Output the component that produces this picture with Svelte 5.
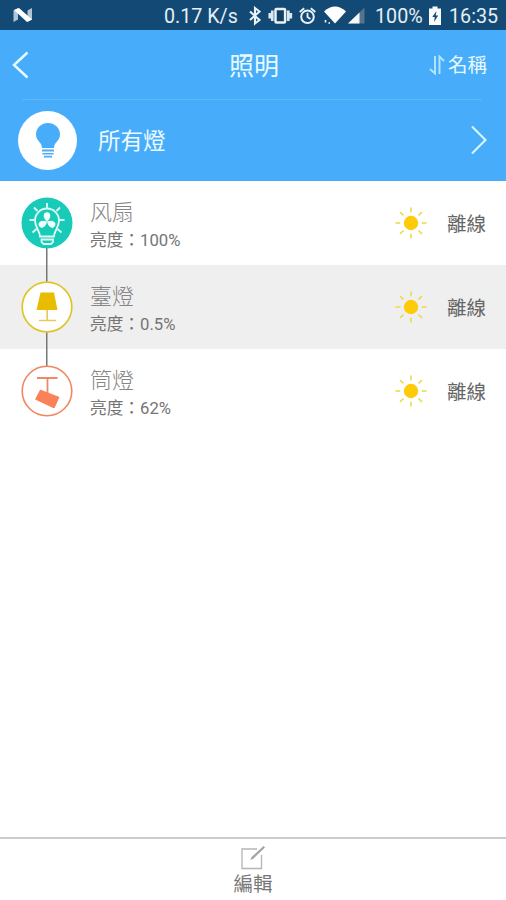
<script>
  const lights = [
    { name: '风扇', level: '100%', kind: 'fan', color: '#18cbb8' },
    { name: '臺燈', level: '0.5%', kind: 'table', color: '#dfc52c' },
    { name: '筒燈', level: '62%', kind: 'spot', color: '#f28661' }
  ];
  const rays = [0, 45, 90, 135, 180, 225, 270, 315];
</script>

<div class="screen">
  <div class="status">
    <svg class="logo" width="20" height="16" viewBox="0 0 20 16">
      <path d="M.500 3.500 5 1v11.500L.500 15zM14.500 3.500 19 1v11.500L14.500 15z" fill="#b3c5d5" />
      <path d="M1 3 6 1l13 11.500-5 2.500z" fill="#fff" />
    </svg>
    <span class="speed">0.17 K/s</span>
    <svg class="icons" width="124" height="22" viewBox="246 5 124 22">
      <path d="M250 11.500l9.500 8.500-4.500 3.500V8l4.500 3.500-9.500 8.500" fill="none" stroke="#e8f2f8" stroke-width="2.100" />
      <rect x="275.500" y="9" width="9.600" height="13.600" rx="1" fill="#123f64" stroke="#e8f2f8" stroke-width="2.500" />
      <path d="M272.300 10.500v10.500M288.300 10.500v10.500M269.800 13v5.500M290.800 13v5.500" stroke="#dce8f0" stroke-width="2.700" />
      <circle cx="307.500" cy="16.800" r="6.300" fill="none" stroke="#e8f2f8" stroke-width="2" />
      <path d="M307.500 12.800v4.200l3 2M299.700 12l4.500-3.800M315.300 12l-4.500-3.800" fill="none" stroke="#e8f2f8" stroke-width="1.800" />
      <path d="M324 11.500q11-10 22 0L335 23.500z" fill="#fff" />
      <path d="M325.500 20v2.500M328.500 23h1.500" stroke="#fff" stroke-width="1.500" />
      <path d="M364.500 7.500v16H348z" fill="#53738e" />
      <path d="M359.500 12.500v11H348z" fill="#f5f9fc" />
    </svg>
    <span class="percent">100%</span>
    <svg class="battery" width="14" height="20" viewBox="0 0 14 20">
      <path d="M1 2.500h3.500V.500h5v2H13V19H1z" fill="#f7fbfd" />
      <path d="M8.500 5 4.300 11h2.500L6 16l4.200-6.500H7.700z" fill="#164871" />
    </svg>
    <span class="clock">16:35</span>
  </div>

  <header>
    <svg class="back" width="18" height="30" viewBox="0 0 18 30"><path d="M16.500 2.500 3 15 16.500 27.500" fill="none" stroke="#e5fbff" stroke-width="2.500" /></svg>
    <h1>照明</h1>
    <div class="sort">
      <svg width="17" height="20" viewBox="0 0 17 20">
        <path d="M1 14 6 18.500V1M10.500 19V1.500l4.500 4.500" fill="none" stroke="#b4e6fa" stroke-width="1.900" />
      </svg>
      <span>名稱</span>
    </div>
  </header>

  <div class="all">
    <div class="disc">
      <svg width="26" height="36" viewBox="0 0 26 36" fill="#47adf8">
        <path d="M7 26c0-6-6-7-6-13.500a12 11.500 0 0 1 24 0c0 6.500-6 7.500-6 13.500z" />
        <path d="M7 27.500h12v2H7zM7.500 31h11v1.600h-11zM9 33.800h8v1.700H9z" />
      </svg>
    </div>
    <span class="all-name">所有燈</span>
    <svg width="18" height="32" viewBox="0 0 18 32"><path d="M2 2.500 15.500 16 2 29.500" fill="none" stroke="#dff8ff" stroke-width="2" /></svg>
  </div>

  <main>
    {#each lights as light}
      <div class="row">
        <div class="rail">
          <svg width="52" height="52" viewBox="0 0 52 52">
            {#if light.kind === 'fan'}
              <circle cx="26" cy="26" r="25.500" fill={light.color} />
              <g fill="none" stroke="#dffcf6" stroke-width="1.800">
                <path d="M19 39.500c0-6-5-8.500-5-16a12 12 0 0 1 24 0c0 7.500-5 10-5 16z" />
                <path d="M20.500 42.500h11.500v2.500l-2 2h-7.500l-2-2z" />
                <path d="M26 6v5M13 10.500l3.500 3.500M39 10.500 35.500 14M8.500 23h5M43.500 23h-5M11.500 35.500l4-3.500M40.500 35.500l-4-3.500" />
              </g>
              <g fill="#effffc">
                {#each [0, 120, 240] as angle}
                  <path d="M26 24.500q-4.500-4-2.800-8 2.800-2.500 5.600 0 1.700 4-2.800 8z" transform="rotate({angle} 26 24.500)" />
                {/each}
              </g>
            {:else if light.kind === 'table'}
              <circle cx="26" cy="26" r="24.800" fill="#fff" stroke={light.color} stroke-width="1.700" />
              <path d="M19.500 11.500H33l3.500 17.500h-21z" fill="#e8bd00" />
              <path d="M26.200 29v10M18 39.500h17" stroke="#e6ca55" stroke-width="1.700" />
            {:else}
              <circle cx="26" cy="26" r="24.800" fill="#fff" stroke={light.color} stroke-width="1.600" />
              <path d="M16 13h20.500M26.500 13v15" stroke="#ef8965" stroke-width="1.800" />
              <path d="M19.500 25.500 37.500 32.500 33 42.500 15 34z" fill="#fa8256" stroke="#fa8256" stroke-width="1.500" stroke-linejoin="round" />
            {/if}
          </svg>
        </div>
        <div class="info">
          <div class="name">{light.name}</div>
          <div class="level">亮度：{light.level}</div>
        </div>
        <svg class="sun" width="34" height="34" viewBox="0 0 34 34">
          <circle cx="17" cy="17" r="7.200" fill="#fdcb08" />
          {#each rays as angle}
            <path d="M17 1.500v4.800" stroke="#e9dd55" stroke-width="1.700" transform="rotate({angle} 17 17)" />
          {/each}
        </svg>
        <span class="state">離線</span>
      </div>
    {/each}
  </main>

  <footer>
    <svg width="26" height="25" viewBox="0 0 26 25">
      <path d="M17 4H2v19.500h19.500V10" fill="none" stroke="#b5b5b5" stroke-width="1.300" />
      <path d="m10.500 15 1-3L23.500 1l1.500 1.500L13 14z" fill="#a5a5a5" />
    </svg>
    <span>編輯</span>
  </footer>
</div>

<style>
  :global(body) { margin: 0; }
  .screen {
    width: 506px;
    height: 900px;
    display: flex;
    flex-direction: column;
    overflow: hidden;
    background: #fff;
    font-family: Roboto, "Noto Sans CJK TC", sans-serif;
  }
  svg { display: block; flex: none; }
  .status {
    height: 30px;
    flex: none;
    display: flex;
    align-items: center;
    background: #134a75;
    color: #e5eff6;
    font-size: 19.7px;
    white-space: nowrap;
  }
  .status span { padding-top: 3px; box-sizing: border-box; height: 30px; line-height: 27px; }
  .logo { margin-left: 13px; }
  .speed { width: 82px; margin-left: 131px; }
  .icons { margin-top: 2px; }
  .percent { width: 54px; margin-left: 5px; }
  .battery { margin: 2px 7px 0 -1px; }
  header {
    height: 69px;
    flex: none;
    display: flex;
    align-items: center;
    background: #47adfb;
    color: #e9faff;
  }
  .back { margin-left: 11px; }
  h1 {
    margin: 0 0 0 200px;
    padding-top: 4px;
    width: 200px;
    font-size: 25px;
    line-height: 36px;
    font-weight: 400;
  }
  .sort { display: flex; align-items: center; font-size: 19.5px; line-height: 28px; }
  .sort span { margin-left: 2px; padding-top: 3px; }
  .all {
    height: 82px;
    flex: none;
    box-sizing: border-box;
    display: flex;
    align-items: center;
    padding: 0 18px;
    background: linear-gradient(90deg, transparent 22px, #5bb6fa 22px, #5bb6fa 482px, transparent 482px) top / 100% 1px no-repeat #47adfb;
    color: #eefbff;
  }
  .disc {
    width: 59px;
    height: 59px;
    border-radius: 50%;
    background: #fff;
    display: flex;
    align-items: center;
    justify-content: center;
  }
  .all-name { flex: 1; margin-left: 21px; padding-top: 2px; font-size: 22.5px; line-height: 32px; }
  main { flex: 1; }
  .row { height: 84px; display: flex; align-items: center; }
  .row:nth-child(even) { background: #efefef; }
  .rail {
    width: 52px;
    height: 84px;
    margin-left: 21px;
    display: flex;
    align-items: center;
    background: linear-gradient(#777, #777) center / 1.5px 100% no-repeat;
  }
  .row:first-child .rail { background-position: center bottom; background-size: 1.5px 50%; }
  .row:last-child .rail { background-position: center top; background-size: 1.5px 50%; }
  .info { width: 305px; margin-left: 17px; padding-top: 5px; }
  .name { color: #858585; font-size: 22px; line-height: 30px; font-weight: 300; }
  .level { color: #747474; font-size: 16.7px; line-height: 26px; font-weight: 400; }
  .sun { margin-left: -1px; }
  .state { margin-left: 19px; padding-top: 4px; color: #666; font-size: 19.5px; line-height: 28px; }
  footer {
    height: 63px;
    box-sizing: border-box;
    flex: none;
    border-top: 2px solid #cbcbcb;
    padding-top: 6px;
    display: flex;
    flex-direction: column;
    align-items: center;
    color: #777;
    font-size: 19.5px;
    line-height: 26px;
  }
  footer span { padding-top: 2px; }
</style>
